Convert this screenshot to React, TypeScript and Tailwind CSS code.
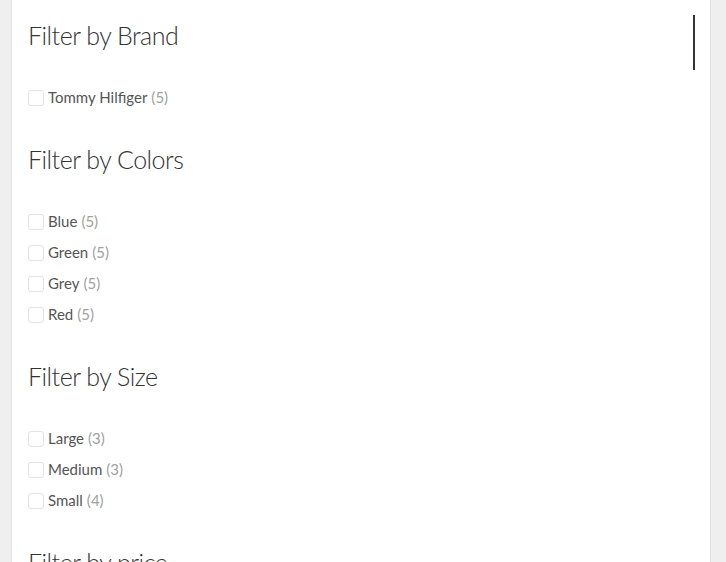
import React from "react";

type Item = { label: string; count: number };
const sections: { title: string; items: Item[] }[] = [
  { title: "Filter by Brand", items: [{ label: "Tommy Hilfiger", count: 5 }] },
  {
    title: "Filter by Colors",
    items: [
      { label: "Blue", count: 5 },
      { label: "Green", count: 5 },
      { label: "Grey", count: 5 },
      { label: "Red", count: 5 },
    ],
  },
  {
    title: "Filter by Size",
    items: [
      { label: "Large", count: 3 },
      { label: "Medium", count: 3 },
      { label: "Small", count: 4 },
    ],
  },
  { title: "Filter by price", items: [] },
];

export default function App() {
  return (
    <div className="h-[562px] w-[726px] overflow-hidden bg-[#efefef] pl-[11px] pr-[15px] font-['Lato',sans-serif]">
      <div className="relative h-full border-x border-[#e2e2e2] bg-white pl-[16px] pt-[15px]">
        <div className="absolute left-[681px] top-[15px] h-[55px] w-[2px] bg-[#333]" />
        {sections.map((s) => (
          <div key={s.title} className="mb-[26px]">
            <h2 className="h-[40px] text-[25px] font-light leading-[40px] tracking-[-0.5px] text-[#333]">{s.title}</h2>
            {s.items.length > 0 && (
              <ul className="mt-[27px]">
                {s.items.map((it) => (
                  <li key={it.label} className="flex h-[31px] items-center gap-[4px] text-[15px]">
                    <span className="h-[16px] w-[16px] rounded-[3px] border border-[#e3e3e3] bg-white" />
                    <span className="text-[#555]">{it.label}</span>
                    <span className="text-[#a0a0a0]">({it.count})</span>
                  </li>
                ))}
              </ul>
            )}
          </div>
        ))}
      </div>
    </div>
  );
}
